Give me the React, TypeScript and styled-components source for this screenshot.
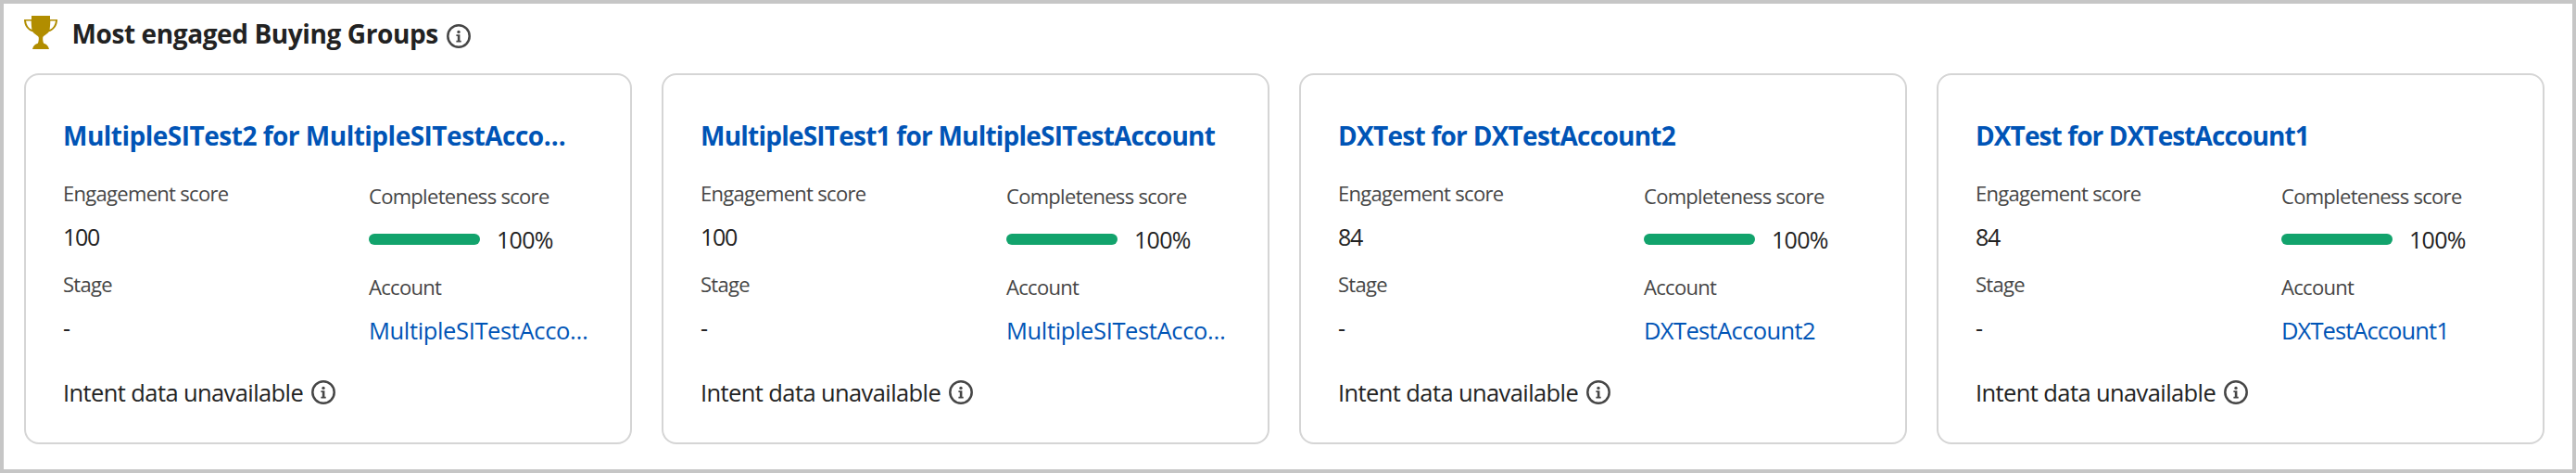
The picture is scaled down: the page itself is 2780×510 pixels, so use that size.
import React from 'react';
import styled, { createGlobalStyle } from 'styled-components';

const GlobalStyle = createGlobalStyle`
  * { box-sizing: border-box; }
  body { margin: 0; background: #fff; }
`;

const Panel = styled.section`
  height: 510px;
  padding: 0 26px 0 22px;
  border: 4px solid #c6c6c6;
  background: #fff;
  color: #222;
  font-family: 'Open Sans', 'Noto Sans', sans-serif;
  white-space: nowrap;
`;

const Header = styled.header`
  display: flex;
  align-items: flex-start;
  height: 75px;
  padding-top: 13px;
`;

const Heading = styled.h2`
  margin: 1px 9px 0 15.5px;
  font-size: 28px;
  line-height: 36px;
  font-weight: 700;
  letter-spacing: -0.4px;
`;

const HeaderInfo = styled.span`
  display: flex;
  margin-top: 9px;
`;

const Cards = styled.div`
  display: grid;
  grid-template-columns: repeat(4, 656px);
  gap: 32px;
`;

const Card = styled.article`
  height: 400px;
  padding: 47px 20px 0 40px;
  border: 2px solid #d5d5d5;
  border-radius: 16px;
`;

const Title = styled.a<{ $tracking: number }>`
  display: block;
  color: #0054b6;
  font-size: 28px;
  line-height: 36px;
  font-weight: 700;
  letter-spacing: ${p => p.$tracking}px;
`;

const Columns = styled.div`
  display: grid;
  grid-template-columns: 330px 1fr;
  height: 243px;
`;

const Column = styled.div<{ $top: number }>`
  display: flex;
  flex-direction: column;
  padding-top: ${p => p.$top}px;
`;

const Field = styled.div`
  height: 98px;
`;

const Label = styled.div`
  margin-bottom: 17px;
  color: #464646;
  font-size: 22px;
  line-height: 28px;
  letter-spacing: -0.7px;
`;

const Value = styled.div<{ $tracking?: number }>`
  display: flex;
  align-items: center;
  font-size: 25px;
  line-height: 32px;
  letter-spacing: ${p => p.$tracking ?? -0.7}px;
`;

const AccountLink = styled.a<{ $tracking: number }>`
  display: block;
  color: #0054b6;
  font-size: 25.5px;
  line-height: 32px;
  letter-spacing: ${p => p.$tracking}px;
`;

const Meter = styled.span`
  width: 120px;
  height: 12px;
  margin-right: 18px;
  border-radius: 6px;
  background: #12a36c;
`;

const Intent = styled.div`
  display: flex;
  align-items: center;
  gap: 9px;
  font-size: 25.5px;
  line-height: 32px;
  letter-spacing: -0.6px;
`;

const InfoIcon = () => (
  <svg width="26" height="26" viewBox="0 0 26 26" fill="#464646">
    <circle cx="13" cy="13" r="11.7" fill="none" stroke="#464646" strokeWidth="2.5" />
    <circle cx="13" cy="8.4" r="1.7" />
    <path d="M10.4 11.2h4v6.5h1.3v1.7h-5.3v-1.7h1.4v-4.8h-1.4z" />
  </svg>
);

const TrophyIcon = () => (
  <svg width="36" height="36" viewBox="0 0 36 36" fill="#b18d00">
    <path d="M8 0h20v4h8c0 6.2-3.1 11.2-9.3 13.3C25 20 21 21.6 20.3 23c-.4 3 .2 5 .9 6.8 2.8.5 4.9 2.5 5.8 6.2H9c.9-3.7 3-5.7 5.8-6.2.7-1.8 1.3-3.8.9-6.8C15 21.6 11 20 9.300 17.300 3.100 15.200 0 10.200 0 4h8zM2 5.600c.5 4.400 2.600 7.900 6.400 9.500C8 12 7.700 8.500 7.700 5.600zM28.300 5.600c0 2.900-.3 6.400-.7 9.500 3.800-1.600 5.900-5.100 6.400-9.500z" />
  </svg>
);

const groups = [
  { title: 'MultipleSITest2 for MultipleSITestAcco…', tracking: -0.5, score: '100', account: 'MultipleSITestAcco…', accountTracking: -0.36 },
  { title: 'MultipleSITest1 for MultipleSITestAccount', tracking: -0.77, score: '100', account: 'MultipleSITestAcco…', accountTracking: -0.36 },
  { title: 'DXTest for DXTestAccount2', tracking: -0.73, score: '84', account: 'DXTestAccount2', accountTracking: -0.63 },
  { title: 'DXTest for DXTestAccount1', tracking: -0.9, score: '84', account: 'DXTestAccount1', accountTracking: -0.92 },
];

export default function App() {
  return (
    <>
      <GlobalStyle />
      <Panel>
        <Header>
          <TrophyIcon />
          <Heading>Most engaged Buying Groups</Heading>
          <HeaderInfo><InfoIcon /></HeaderInfo>
        </Header>
        <Cards>
          {groups.map(g => (
            <Card key={g.title}>
              <Title $tracking={g.tracking}>{g.title}</Title>
              <Columns>
                <Column $top={30}>
                  <Field>
                    <Label>Engagement score</Label>
                    <Value $tracking={-1.3}>{g.score}</Value>
                  </Field>
                  <Field>
                    <Label>Stage</Label>
                    <Value>-</Value>
                  </Field>
                </Column>
                <Column $top={33}>
                  <Field>
                    <Label>Completeness score</Label>
                    <Value><Meter />100%</Value>
                  </Field>
                  <Field>
                    <Label>Account</Label>
                    <AccountLink $tracking={g.accountTracking}>{g.account}</AccountLink>
                  </Field>
                </Column>
              </Columns>
              <Intent>Intent data unavailable <InfoIcon /></Intent>
            </Card>
          ))}
        </Cards>
      </Panel>
    </>
  );
}
